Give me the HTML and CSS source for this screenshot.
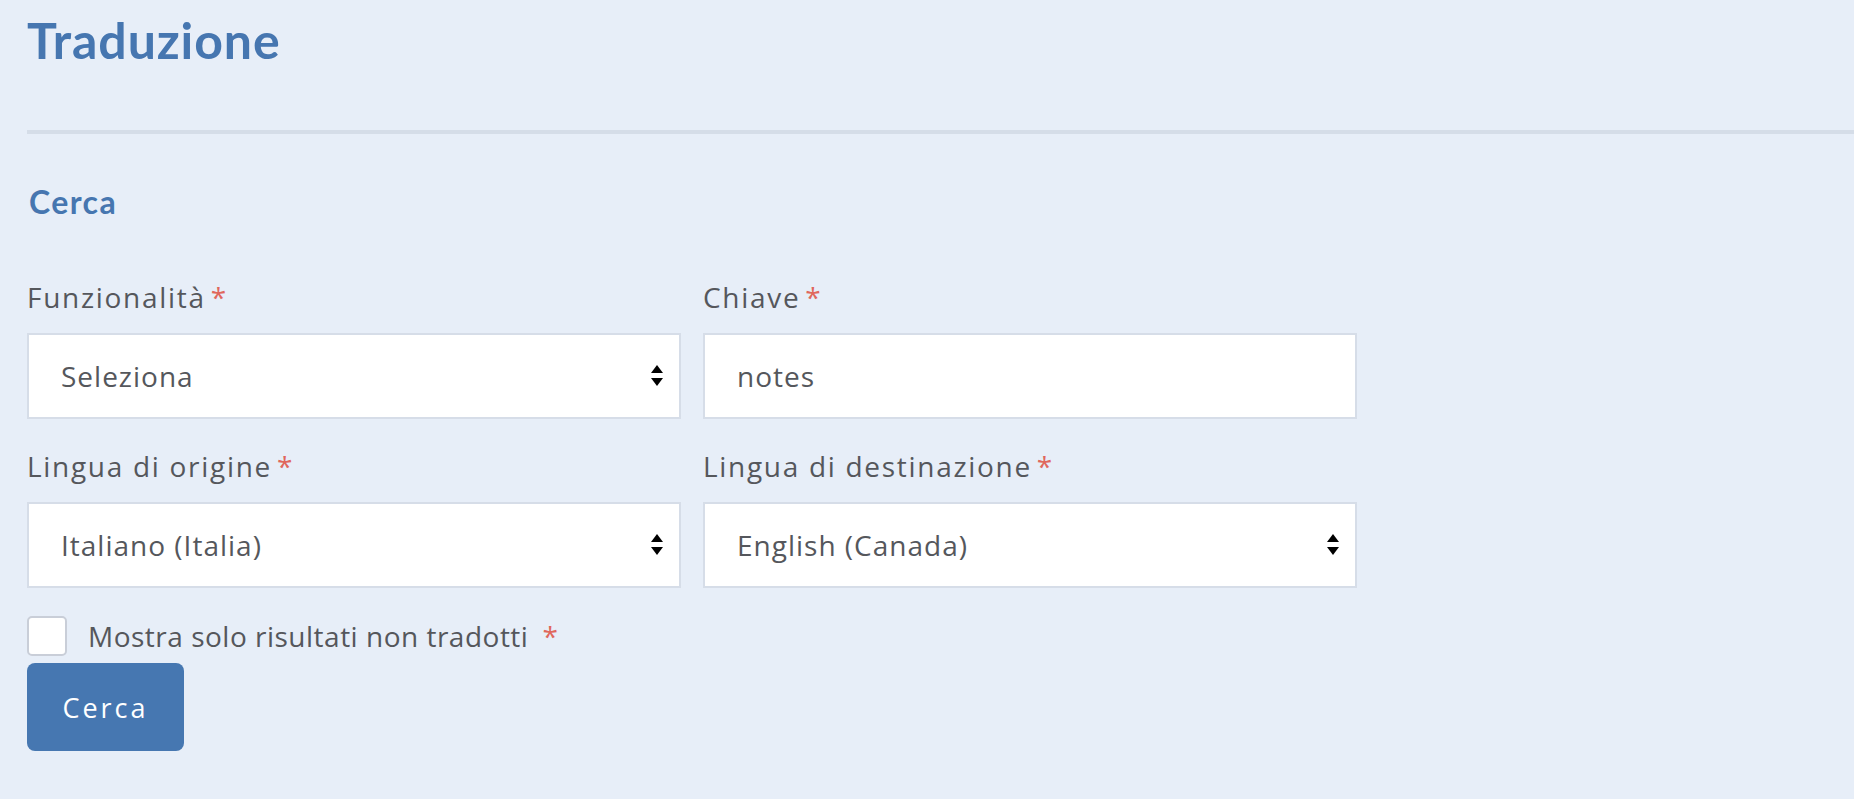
FILE: index.html
```html
<!DOCTYPE html>
<html lang="it">
<head>
<meta charset="utf-8">
<title>Traduzione</title>
<link rel="stylesheet" href="styles.css">
</head>
<body>
<div class="page">
  <h1 class="title">Traduzione</h1>
  <div class="divider"></div>
  <h3 class="section">Cerca</h3>
  <form class="form">
    <div class="grid">
      <div class="field">
        <label class="label">Funzionalità<span class="req">*</span></label>
        <div class="control select">
          <span class="value">Seleziona</span>
          <svg class="arrows" width="12" height="22" viewBox="0 0 12 22"><path d="M6 0 L12 8 L0 8 Z" fill="#000"/><path d="M0 13 L12 13 L6 21 Z" fill="#000"/></svg>
        </div>
      </div>
      <div class="field">
        <label class="label">Chiave<span class="req">*</span></label>
        <div class="control">
          <span class="value">notes</span>
        </div>
      </div>
      <div class="field">
        <label class="label">Lingua di origine<span class="req">*</span></label>
        <div class="control select">
          <span class="value">Italiano (Italia)</span>
          <svg class="arrows" width="12" height="22" viewBox="0 0 12 22"><path d="M6 0 L12 8 L0 8 Z" fill="#000"/><path d="M0 13 L12 13 L6 21 Z" fill="#000"/></svg>
        </div>
      </div>
      <div class="field">
        <label class="label">Lingua di destinazione<span class="req">*</span></label>
        <div class="control select">
          <span class="value">English (Canada)</span>
          <svg class="arrows" width="12" height="22" viewBox="0 0 12 22"><path d="M6 0 L12 8 L0 8 Z" fill="#000"/><path d="M0 13 L12 13 L6 21 Z" fill="#000"/></svg>
        </div>
      </div>
    </div>
    <div class="check-row">
      <span class="checkbox"></span>
      <span class="check-label">Mostra solo risultati non tradotti</span><span class="req req-wide">*</span>
    </div>
    <button type="button" class="btn">Cerca</button>
  </form>
</div>
</body>
</html>
```
FILE: styles.css
```css
html, body {
  margin: 0;
  padding: 0;
  background: #e7eef8;
}
body {
  font-family: "Open Sans", "Liberation Sans", sans-serif;
  color: #55575c;
}
.page {
  padding: 10px 0 0 27px;
}
.title {
  margin: 0;
  font-family: Lato, "Open Sans", sans-serif;
  font-weight: 700;
  font-size: 50px;
  line-height: 60px;
  letter-spacing: 0.9px;
  color: #4676b0;
}
.divider {
  margin-top: 60px;
  height: 4px;
  background: #d5dde8;
}
.section {
  margin: 49px 0 0 2px;
  font-family: Lato, "Open Sans", sans-serif;
  font-weight: 700;
  font-size: 32px;
  line-height: 37px;
  letter-spacing: 1.4px;
  color: #4676b0;
}
.form {
  margin-top: 60px;
}
.grid {
  display: grid;
  grid-template-columns: 654px 654px;
  column-gap: 22px;
  row-gap: 30px;
}
.field {
  display: flex;
  flex-direction: column;
}
.label {
  font-size: 28px;
  line-height: 34px;
  letter-spacing: 1.7px;
  color: #55575c;
  margin-bottom: 19px;
}
.req {
  color: #e0675c;
  margin-left: 5px;
}
.req-wide {
  margin-left: 14px;
  font-size: 28px;
}
.control {
  box-sizing: border-box;
  height: 86px;
  background: #fff;
  border: 2px solid #d6dde8;
  display: flex;
  align-items: center;
  justify-content: space-between;
  padding: 0 16px 0 32px;
}
.value {
  font-size: 28px;
  letter-spacing: 1px;
  color: #55575c;
}
.arrows {
  display: block;
}
.check-row {
  display: flex;
  align-items: center;
  margin-top: 28px;
  height: 40px;
}
.checkbox {
  box-sizing: border-box;
  width: 40px;
  height: 40px;
  background: #fff;
  border: 2px solid #c9ced8;
  border-radius: 5px;
  margin-right: 21px;
}
.check-label {
  font-size: 28px;
  letter-spacing: 0.5px;
  line-height: 34px;
  color: #55575c;
}
.btn {
  display: block;
  margin-top: 7px;
  width: 157px;
  height: 88px;
  border: none;
  border-radius: 8px;
  background: #4677b1;
  color: #fff;
  font-family: "Open Sans", "Liberation Sans", sans-serif;
  font-size: 27px;
  letter-spacing: 3px;
  padding: 0;
}
```
